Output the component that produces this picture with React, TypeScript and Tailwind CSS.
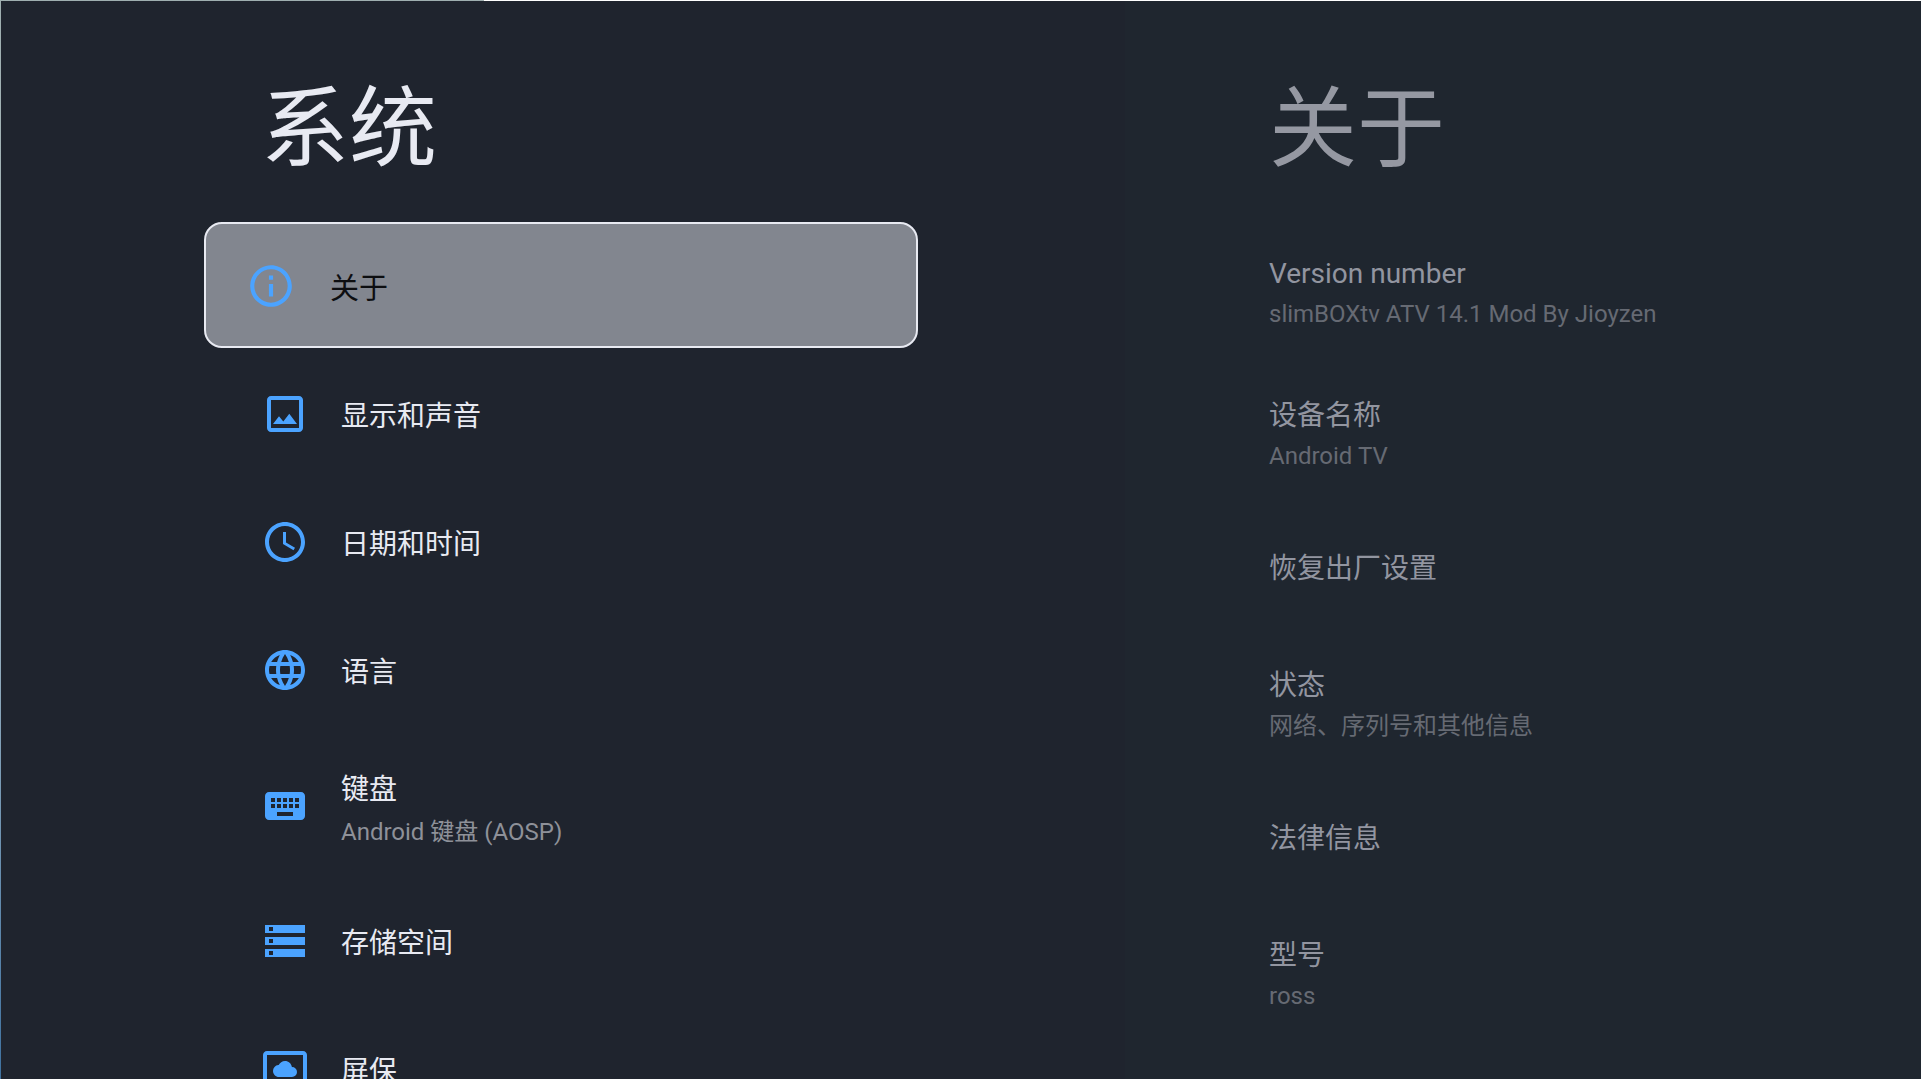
import React from "react";
import type { IconType } from "react-icons";
import {
  MdAccessTime,
  MdInfoOutline,
  MdKeyboard,
  MdLanguage,
  MdOutlineImage,
  MdSettingsSystemDaydream,
  MdStorage,
} from "react-icons/md";
import clsx from "clsx";

type MenuItem = {
  icon: IconType;
  label: string;
  summary?: string;
};

type Preference = {
  label: string;
  summary?: string;
};

const menuItems: MenuItem[] = [
  { icon: MdInfoOutline, label: "关于" },
  { icon: MdOutlineImage, label: "显示和声音" },
  { icon: MdAccessTime, label: "日期和时间" },
  { icon: MdLanguage, label: "语言" },
  { icon: MdKeyboard, label: "键盘", summary: "Android 键盘 (AOSP)" },
  { icon: MdStorage, label: "存储空间" },
  { icon: MdSettingsSystemDaydream, label: "屏保" },
];

const aboutItems: Preference[] = [
  { label: "Version number", summary: "slimBOXtv ATV 14.1 Mod By Jioyzen" },
  { label: "设备名称", summary: "Android TV" },
  { label: "恢复出厂设置" },
  { label: "状态", summary: "网络、序列号和其他信息" },
  { label: "法律信息" },
  { label: "型号", summary: "ross" },
];

const MenuRow = ({ item, focused }: { item: MenuItem; focused: boolean }) => {
  const Icon = item.icon;

  return (
    <button
      type="button"
      className={clsx(
        "flex w-full shrink-0 items-center text-left",
        focused
          ? "mb-0.5 h-[126px] gap-[34px] rounded-[18px] border-2 border-[#e8eaf2] bg-[#82868f] pt-0.5 pl-10 text-[29px] text-[#0d0e11]"
          : "gap-8 pl-[57px] text-[28px] text-[#e8eaf2]",
        !focused && (item.summary ? "h-[143px]" : "h-[128px]")
      )}
    >
      <Icon
        className={clsx(
          "shrink-0 text-[#4ba3ff]",
          focused ? "size-[50px]" : "size-12"
        )}
      />
      <span className="flex flex-col gap-1.5 pt-1.5">
        <span className="leading-10">{item.label}</span>
        {item.summary && (
          <span className="text-2xl leading-8 text-[#8e9199]">
            {item.summary}
          </span>
        )}
      </span>
    </button>
  );
};

const PreferenceRow = ({ item }: { item: Preference }) => (
  <button
    type="button"
    className={clsx(
      "flex w-full shrink-0 flex-col justify-center gap-1 pb-0.5 text-left",
      item.summary ? "h-[142px]" : "h-[128px]"
    )}
  >
    <span className="text-[28px] leading-10 text-[#9295a0]">{item.label}</span>
    {item.summary && (
      <span className="text-2xl leading-8 text-[#666a73]">{item.summary}</span>
    )}
  </button>
);

const App = () => {
  return (
    <div className="flex h-screen flex-col overflow-hidden bg-[#1f242e] font-['Roboto','Noto_Sans_CJK_SC',sans-serif]">
      <div className="flex h-px shrink-0">
        <div className="w-[484px] bg-[#9fafb0]" />
        <div className="flex-1 bg-white" />
      </div>
      <div className="grid min-h-0 flex-1 grid-cols-[1px_1124fr_796fr]">
        <div className="bg-linear-to-b from-[#9fafb0] via-[#a9bcc4] to-[#3f72a0]" />
        <main className="flex min-h-0 flex-col overflow-hidden pr-[207px] pl-[203px]">
          <h1 className="mt-[68px] mb-[33px] shrink-0 pl-[57px] text-[88px] leading-[120px] text-[#e8eaf2]">
            系统
          </h1>
          <nav className="flex flex-col" aria-label="系统">
            {menuItems.map((item, index) => (
              <MenuRow key={item.label} item={item} focused={index === 0} />
            ))}
          </nav>
        </main>
        <aside className="flex min-h-0 flex-col overflow-hidden bg-[#1f262f] pl-36">
          <h2 className="mt-[68px] mb-[33px] shrink-0 text-[88px] leading-[120px] text-[#9598a2]">
            关于
          </h2>
          <div className="flex flex-col">
            {aboutItems.map((item) => (
              <PreferenceRow key={item.label} item={item} />
            ))}
          </div>
        </aside>
      </div>
    </div>
  );
};

export default App;
